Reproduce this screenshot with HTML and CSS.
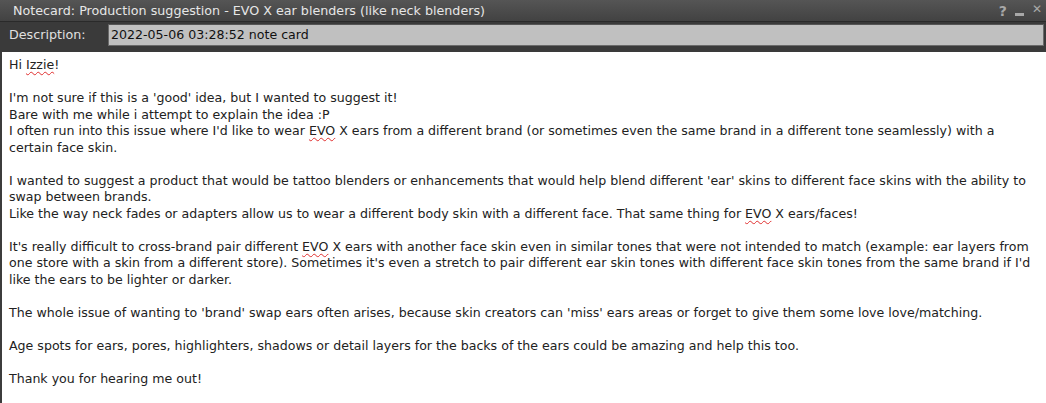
FILE: index.html
```html
<!DOCTYPE html>
<html>
<head>
<meta charset="utf-8">
<link rel="stylesheet" href="styles.css">
</head>
<body>
<div class="win">
  <div class="titlebar">
    <span class="title">Notecard: Production suggestion - EVO X ear blenders (like neck blenders)</span>
    <span class="controls"><span class="ctl q">?</span><span class="ctl min"></span><span class="ctl x">✕</span></span>
  </div>
  <div class="descrow">
    <span class="label">Description:</span>
    <div class="input">2022-05-06 03:28:52 note card</div>
  </div>
  <div class="body">
    <div class="text">
<p>Hi <span class="sp">Izzie</span>!</p>
<p class="blank"></p>
<p>I'm not sure if this is a 'good' idea, but I wanted to suggest it!</p>
<p>Bare with me while i attempt to explain the idea :P</p>
<p>I often run into this issue where I'd like to wear <span class="sp">EVO</span> X ears from a different brand (or sometimes even the same brand in a different tone seamlessly) with a certain face skin.</p>
<p class="blank"></p>
<p>I wanted to suggest a product that would be tattoo blenders or enhancements that would help blend different 'ear' skins to different face skins with the ability to swap between brands.</p>
<p>Like the way neck fades or adapters allow us to wear a different body skin with a different face. That same thing for <span class="sp">EVO</span> X ears/faces!</p>
<p class="blank"></p>
<p>It's really difficult to cross-brand pair different <span class="sp">EVO</span> X ears with another face skin even in similar tones that were not intended to match (example: ear layers from one store with a skin from a different store). Sometimes it's even a stretch to pair different ear skin tones with different face skin tones from the same brand if I'd like the ears to be lighter or darker.</p>
<p class="blank"></p>
<p>The whole issue of wanting to 'brand' swap ears often arises, because skin creators can 'miss' ears areas or forget to give them some love love/matching.</p>
<p class="blank"></p>
<p>Age spots for ears, pores, highlighters, shadows or detail layers for the backs of the ears could be amazing and help this too.</p>
<p class="blank"></p>
<p>Thank you for hearing me out!</p>
    </div>
  </div>
</div>
</body>
</html>
```
FILE: styles.css
```css
html, body {
  margin: 0;
  padding: 0;
  width: 1046px;
  height: 403px;
  overflow: hidden;
  background: #3c3c3c;
  font-family: "DejaVu Sans", sans-serif;
}
.win {
  display: flex;
  flex-direction: column;
  height: 403px;
}
.titlebar {
  height: 22px;
  flex: none;
  background: linear-gradient(#555555, #424242);
  border-bottom: 1px solid #2a2a2a;
  display: flex;
  align-items: center;
  justify-content: space-between;
  padding-left: 13px;
  padding-right: 4px;
  box-sizing: border-box;
}
.title {
  color: #e6e6e6;
  font-size: 12.7px;
}
.controls {
  display: flex;
  align-items: center;
  gap: 8px;
  color: #a8a8a8;
}
.ctl.q {
  font-size: 14px;
  font-weight: bold;
}
.ctl.min {
  width: 9px;
  height: 3px;
  background: #a8a8a8;
  margin-top: 8px;
}
.ctl.x {
  font-size: 12px;
  margin-top: -4px;
}
.descrow {
  flex: none;
  height: 30px;
  display: flex;
  align-items: flex-start;
  padding-top: 2px;
  padding-right: 2px;
  box-sizing: border-box;
  background: #3a3a3a;
}
.label {
  color: #e0e0e0;
  font-size: 12.7px;
  width: 108px;
  padding-left: 9px;
  box-sizing: border-box;
  line-height: 22px;
}
.input {
  flex: 1;
  height: 22px;
  box-sizing: border-box;
  background: #c0c0c0;
  border: 1px solid #6a6a6a;
  border-top-color: #555;
  color: #111;
  font-size: 12.6px;
  line-height: 20px;
  padding-left: 2px;
}
.body {
  flex: 1;
  background: #ffffff;
  margin-left: 2px;
  padding: 5px 0 0 7px;
}
.text {
  color: #222;
  font-size: 12.6px;
  line-height: 16.5px;
  padding-right: 6px;
}
.text p {
  margin: 0;
}
.text p.blank {
  height: 16.5px;
}
.sp {
  text-decoration: underline wavy #e03030;
  text-decoration-thickness: 1px;
  text-underline-offset: 2px;
}
```
